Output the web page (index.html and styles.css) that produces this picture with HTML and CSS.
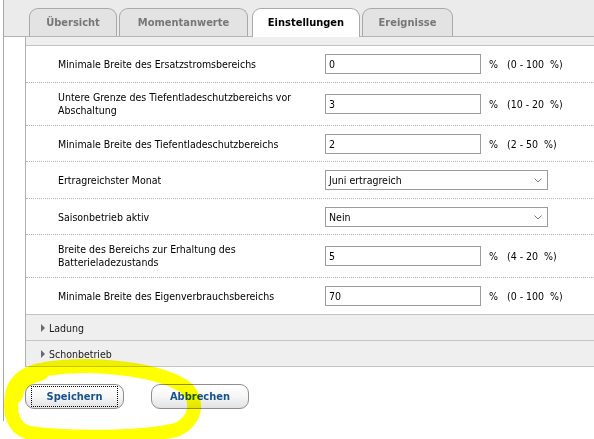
FILE: index.html
```html
<!DOCTYPE html>
<html lang="de">
<head>
<meta charset="utf-8">
<title>Einstellungen</title>
<link rel="stylesheet" href="styles.css">
</head>
<body>
<div class="frame">
  <div class="tabbar">
    <div class="tab tab-a">Übersicht</div>
    <div class="tab tab-b">Momentanwerte</div>
    <div class="tab tab-c active">Einstellungen</div>
    <div class="tab tab-d">Ereignisse</div>
  </div>
  <div class="content">
    <div class="panel">
      <div class="sec-head clipped"></div>
      <div class="rows">
        <div class="row">
          <div class="label">Minimale Breite des Ersatzstromsbereichs</div>
          <div class="ctrl"><input class="field" type="text" value="0"><span class="unit">%   (0 - 100  %)</span></div>
        </div>
        <div class="row">
          <div class="label">Untere Grenze des Tiefentladeschutzbereichs vor Abschaltung</div>
          <div class="ctrl"><input class="field" type="text" value="3"><span class="unit">%   (10 - 20  %)</span></div>
        </div>
        <div class="row row-short">
          <div class="label">Minimale Breite des Tiefentladeschutzbereichs</div>
          <div class="ctrl"><input class="field" type="text" value="2"><span class="unit">%   (2 - 50  %)</span></div>
        </div>
        <div class="row">
          <div class="label">Ertragreichster Monat</div>
          <div class="ctrl"><div class="select"><span>Juni ertragreich</span><svg class="chev" width="8" height="5" viewBox="0 0 8 5"><path d="M0.5 0.5 L4 4 L7.5 0.5" fill="none" stroke="#7a7a7a" stroke-width="1"/></svg></div></div>
        </div>
        <div class="row row-short">
          <div class="label">Saisonbetrieb aktiv</div>
          <div class="ctrl"><div class="select"><span>Nein</span><svg class="chev" width="8" height="5" viewBox="0 0 8 5"><path d="M0.5 0.5 L4 4 L7.5 0.5" fill="none" stroke="#7a7a7a" stroke-width="1"/></svg></div></div>
        </div>
        <div class="row">
          <div class="label">Breite des Bereichs zur Erhaltung des Batterieladezustands</div>
          <div class="ctrl"><input class="field" type="text" value="5"><span class="unit">%   (4 - 20  %)</span></div>
        </div>
        <div class="row">
          <div class="label">Minimale Breite des Eigenverbrauchsbereichs</div>
          <div class="ctrl"><input class="field" type="text" value="70"><span class="unit">%   (0 - 100  %)</span></div>
        </div>
      </div>
      <div class="sec-head"><span class="tri"></span>Ladung</div>
      <div class="sec-head"><span class="tri"></span>Schonbetrieb</div>
    </div>
    <div class="buttons">
      <button class="btn btn-save" type="button">Speichern</button>
      <button class="btn btn-cancel" type="button">Abbrechen</button>
    </div>
  </div>
</div>
<svg class="highlight" width="594" height="439" viewBox="0 0 594 439">
  <path d="M45 369 C90 362 152 368 182 385 C200 396 198 421 176 430 C140 438 70 439 30 433 C12 429 9 410 12 397 C15 384 25 374 45 369 Z" fill="none" stroke="#ffff00" stroke-width="14" stroke-linejoin="round"/>
  <path d="M14 395 C16 383 24 376 40 372" fill="none" stroke="#ffff00" stroke-width="18" stroke-linecap="round"/>
</svg>
</body>
</html>
```
FILE: styles.css
```css
html, body {
  margin: 0;
  padding: 0;
}
body {
  width: 594px;
  height: 439px;
  overflow: hidden;
  position: relative;
  background: #ffffff;
  font-family: "DejaVu Sans Condensed", "DejaVu Sans", sans-serif;
  font-size: 10.5px;
  color: #000000;
}
.frame {
  margin-left: 3px;
  border-left: 1px solid #a8a8a8;
  padding-bottom: 12px;
}
.tabbar {
  height: 36px;
  background: #ebebeb;
  border-bottom: 1px solid #b4b4b4;
  display: flex;
  align-items: flex-end;
  gap: 2px;
  padding-left: 25px;
}
.tab {
  height: 28px;
  box-sizing: border-box;
  padding: 0 17px;
  border: 1px solid #a9a9a9;
  border-bottom: none;
  border-radius: 9px 9px 0 0;
  background: #e3e3e3;
  color: #777777;
  font-weight: bold;
  font-size: 11px;
  line-height: 27px;
  white-space: nowrap;
  text-align: center;
}
.tab-a { width: 88px; padding: 0; }
.tab-b { width: 129px; padding: 0; }
.tab-c { width: 108px; padding: 0; margin-left: 2px; }
.tab-d { width: 91px; padding: 0; }
.tab.active {
  height: 29px;
  margin-bottom: -1px;
  background: #ffffff;
  color: #000000;
}
.content {
  padding-left: 21px;
}
.panel {
  border-left: 1px solid #b0b0b0;
  overflow: hidden;
}
.sec-head {
  height: 25px;
  border-bottom: 1px solid #c4c4c4;
  background: #efefef;
  display: flex;
  align-items: center;
  padding-left: 15px;
  color: #1a1a1a;
  font-size: 10.5px;
}
.sec-head.clipped {
  margin-top: -17px;
}
.tri {
  width: 0;
  height: 0;
  border-left: 4px solid #6a6a6a;
  border-top: 4px solid transparent;
  border-bottom: 4px solid transparent;
  margin-right: 4px;
}
.rows {
  border-bottom: 1px solid #c4c4c4;
}
.row {
  display: grid;
  grid-template-columns: 267px 1fr;
  align-items: center;
  padding: 8px 0 8px 32px;
  border-bottom: 1px dotted #b8b8b8;
}
.row.row-short {
  padding-bottom: 7px;
}
.row:last-child {
  border-bottom: none;
}
.label {
  line-height: 13px;
}
.ctrl {
  display: flex;
  align-items: center;
}
.field {
  width: 156px;
  height: 20px;
  box-sizing: border-box;
  margin: 0;
  padding: 0 3px;
  border: 1px solid #9c9c9c;
  border-radius: 0;
  font: inherit;
  color: #000000;
  background: #ffffff;
}
.unit {
  margin-left: 8px;
  white-space: pre;
}
.select {
  width: 223px;
  height: 20px;
  box-sizing: border-box;
  border: 1px solid #9c9c9c;
  padding: 0 5px 0 3px;
  display: flex;
  align-items: center;
  justify-content: space-between;
  background: #ffffff;
}
.chev {
  display: block;
}
.buttons {
  display: flex;
  gap: 27px;
  margin-top: 17px;
}
.btn {
  position: relative;
  width: 99px;
  height: 25px;
  margin: 0;
  padding: 0;
  border: 1px solid #8e8e8e;
  border-radius: 9px;
  background: linear-gradient(#ffffff 0%, #f6f6f6 50%, #e2e2e2 100%);
  font-family: "DejaVu Sans Condensed", "DejaVu Sans", sans-serif;
  font-weight: bold;
  font-size: 11px;
  color: #17538f;
}
.btn-cancel {
  width: 98px;
}
.btn-save::after {
  content: "";
  position: absolute;
  top: 1px;
  bottom: 1px;
  left: 5px;
  right: 5px;
  border: 1px dotted #000000;
}
.highlight {
  position: absolute;
  left: 0;
  top: 0;
  pointer-events: none;
  mix-blend-mode: multiply;
}
```
